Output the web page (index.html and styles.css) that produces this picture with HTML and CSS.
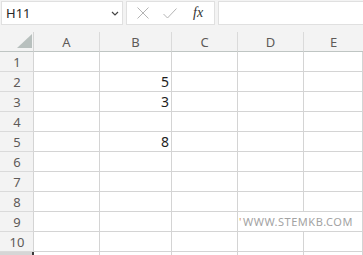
FILE: index.html
```html
<!DOCTYPE html>
<html lang="en">
<head>
    <meta charset="UTF-8">
    <title>Sheet</title>
    <link rel="stylesheet" href="styles.css">
</head>
<body>
    <!-- 顶部编辑栏 -->
    <div class="bar">
        <div class="name-box">
            <span>H11</span>
            <svg class="chev" width="8" height="5" viewBox="0 0 8 5"><path d="M1 1 L4 4 L7 1" fill="none" stroke="#444" stroke-width="1.2"/></svg>
        </div>
        <div class="fx-box">
            <svg width="12" height="12" viewBox="0 0 12 12"><path d="M0.5 0.5 L11.5 11.5 M11.5 0.5 L0.5 11.5" stroke="#b4b4b4" stroke-width="1"/></svg>
            <svg width="14" height="11" viewBox="0 0 14 11"><path d="M0.5 6 L4.5 10 L13.5 0.5" fill="none" stroke="#b4b4b4" stroke-width="1"/></svg>
            <span class="fx">fx</span>
        </div>
        <div class="input"></div>
    </div>

    <!-- 表格 -->
    <div class="sheet">
        <div class="corner"><div class="tri"></div></div>
        <div class="col">A</div>
        <div class="col">B</div>
        <div class="col">C</div>
        <div class="col">D</div>
        <div class="col last">E</div>

        <div class="row">1</div><div class="cell"></div><div class="cell"></div><div class="cell"></div><div class="cell"></div><div class="cell"></div>
        <div class="row">2</div><div class="cell"></div><div class="cell num">5</div><div class="cell"></div><div class="cell"></div><div class="cell"></div>
        <div class="row">3</div><div class="cell"></div><div class="cell num">3</div><div class="cell"></div><div class="cell"></div><div class="cell"></div>
        <div class="row">4</div><div class="cell"></div><div class="cell"></div><div class="cell"></div><div class="cell"></div><div class="cell"></div>
        <div class="row">5</div><div class="cell"></div><div class="cell num">8</div><div class="cell"></div><div class="cell"></div><div class="cell"></div>
        <div class="row">6</div><div class="cell"></div><div class="cell"></div><div class="cell"></div><div class="cell"></div><div class="cell"></div>
        <div class="row">7</div><div class="cell"></div><div class="cell"></div><div class="cell"></div><div class="cell"></div><div class="cell"></div>
        <div class="row">8</div><div class="cell"></div><div class="cell"></div><div class="cell"></div><div class="cell"></div><div class="cell"></div>
        <div class="row">9</div><div class="cell"></div><div class="cell"></div><div class="cell"></div><div class="cell mark"><span class="tick">'</span>WWW.STEMKB.COM</div><div class="cell"></div>
        <div class="row">10</div><div class="cell"></div><div class="cell"></div><div class="cell"></div><div class="cell"></div><div class="cell"></div>
        <div class="row sel"></div><div class="cell"></div><div class="cell"></div><div class="cell"></div><div class="cell"></div><div class="cell"></div>
    </div>
</body>
</html>
```

FILE: styles.css
```css
*{
    margin: 0;
    padding: 0;
    box-sizing: border-box;
}
body{
    width: 363px;
    height: 255px;
    overflow: hidden;
    background-color: #fff;
    font-family: "Noto Sans", "Open Sans", sans-serif;
}
/* 顶部编辑栏 */
.bar{
    height: 32px;
    background-color: #f3f3f3;
    display: flex;
    align-items: flex-start;
    gap: 3px;
    padding: 1px 0 0 1px;
}
.name-box{
    width: 122px;
    height: 24px;
    background-color: #fff;
    border: 1px solid #e0e0e0;
    display: flex;
    align-items: center;
    justify-content: space-between;
    padding: 0 3px 0 4px;
    font-size: 13px;
    color: #262626;
}
.fx-box{
    width: 89px;
    height: 24px;
    background-color: #fff;
    border: 1px solid #e0e0e0;
    display: flex;
    align-items: center;
    gap: 14px;
    padding-left: 10px;
}
.fx{
    font-family: "Liberation Serif", serif;
    font-style: italic;
    font-size: 14px;
    color: #333;
    margin-left: 2px;
}
.input{
    flex: 1;
    height: 24px;
    background-color: #fff;
    border: 1px solid #e0e0e0;
    border-right: none;
}
/* 表格 */
.sheet{
    display: grid;
    grid-template-columns: 34px 66px 72px 66px 66px 1fr;
    grid-auto-rows: 20px;
    font-size: 13px;
}
.corner, .col{
    background-color: #f3f3f3;
    border-bottom: 1px solid #bfc5c3;
    border-right: 1px solid #dadada;
    color: #5e5a58;
    display: flex;
    align-items: center;
    justify-content: center;
}
.corner{
    border-right: 1px solid #d4d4d4;
    justify-content: flex-end;
    align-items: flex-end;
    padding: 0 1px 3px 0;
}
.tri{
    width: 0;
    height: 0;
    border-left: 15px solid transparent;
    border-bottom: 14px solid #b8c0be;
}
.col.last{
    border-right: none;
}
.row{
    background-color: #f3f3f3;
    border-right: 1px solid #d4d4d4;
    border-bottom: 1px solid #dadada;
    color: #5e5a58;
    display: flex;
    align-items: center;
    justify-content: center;
    padding-left: 1px;
}
.row.sel{
    background-color: #d6d6d6;
    border-right: 2px solid #3c3c3c;
}
.cell{
    border-right: 1px solid #d4d4d4;
    border-bottom: 1px solid #d4d4d4;
}
.num{
    font-size: 14px;
    color: #1e1e1e;
    text-align: right;
    padding-right: 2px;
    line-height: 19px;
}
.mark{
    border-right: none;
    white-space: nowrap;
    overflow: visible;
    font-size: 11px;
    letter-spacing: 0.5px;
    color: #a3a3a3;
    line-height: 19px;
    padding-left: 1px;
    position: relative;
    z-index: 1;
}
.tick{
    color: #d9a060;
    margin-right: 1px;
}
```
